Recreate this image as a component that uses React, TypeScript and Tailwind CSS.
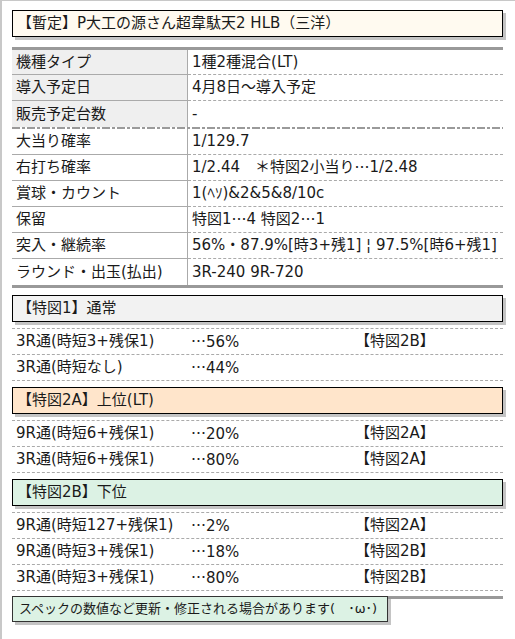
import React from "react";

const font = { fontFamily: '"DejaVu Sans", "Noto Sans CJK JP", sans-serif' };

// "…" comes out half width in DejaVu, the picture has the full-width one
const T = ({ text }: { text: string }) => {
  const parts = text.split("…");
  return (
    <>
      {parts.map((p, i) => (
        <React.Fragment key={i}>
          {i > 0 && <span className="font-['Noto_Sans_CJK_JP']">…</span>}
          {p}
        </React.Fragment>
      ))}
    </>
  );
};

const specRows: { label: string; value: string; shaded?: boolean }[] = [
  { label: "機種タイプ", value: "1種2種混合(LT)", shaded: true },
  { label: "導入予定日", value: "4月8日〜導入予定", shaded: true },
  { label: "販売予定台数", value: "-", shaded: true },
  { label: "大当り確率", value: "1/129.7" },
  { label: "右打ち確率", value: "1/2.44　＊特図2小当り…1/2.48" },
  { label: "賞球・カウント", value: "1(ﾍｿ)&2&5&8/10c" },
  { label: "保留", value: "特図1…4 特図2…1" },
  { label: "突入・継続率", value: "56%・87.9%[時3+残1] ¦ 97.5%[時6+残1]" },
  { label: "ラウンド・出玉(払出)", value: "3R-240 9R-720" },
];

const sections = [
  {
    title: "【特図1】通常",
    bg: "bg-[#f2f2f2]",
    rows: [
      ["3R通(時短3+残保1)", "…56%", "【特図2B】"],
      ["3R通(時短なし)", "…44%", ""],
    ],
  },
  {
    title: "【特図2A】上位(LT)",
    bg: "bg-[#ffe5cb]",
    rows: [
      ["9R通(時短6+残保1)", "…20%", "【特図2A】"],
      ["3R通(時短6+残保1)", "…80%", "【特図2A】"],
    ],
  },
  {
    title: "【特図2B】下位",
    bg: "bg-[#dcf2e4]",
    rows: [
      ["9R通(時短127+残保1)", "…2%", "【特図2A】"],
      ["9R通(時短3+残保1)", "…18%", "【特図2B】"],
      ["3R通(時短3+残保1)", "…80%", "【特図2B】"],
    ],
  },
];

const SpecTable = () => (
  <div className="mt-[10px] border-t-[3px] border-b-[3px] border-[#999]">
    {specRows.map((r, i) => {
      const last = i === specRows.length - 1;
      const dashDot = i === 2;
      return (
        <React.Fragment key={r.label}>
          <div className={`grid grid-cols-[176px_1fr] ${i === 0 ? "h-[25px]" : "h-[26px]"}`}>
            <div
              className={`flex items-center pl-[4px] border-r border-[#aaa] ${r.shaded ? "bg-[#efefef]" : "bg-white"} ${last || dashDot ? "" : "border-b border-b-[#aaa]"}`}
            >
              {r.label}
            </div>
            <div
              className={`flex items-center pl-[4px] whitespace-pre ${last || dashDot ? "" : "border-b border-dashed border-b-[#aaa]"}`}
            >
              <T text={r.value} />
            </div>
          </div>
          {dashDot && (
            <div className="h-[2px] bg-[repeating-linear-gradient(90deg,#9a9a9a_0_8px,transparent_8px_10px,#9a9a9a_10px_13px,transparent_13px_15px)]" />
          )}
        </React.Fragment>
      );
    })}
  </div>
);

export default function App() {
  return (
    <div
      className="min-h-[639px] w-[515px] border-l-2 border-t border-[#c8c8c8] bg-white pl-[10px] pt-[9px] text-[15px] text-[#1a1a1a]"
      style={font}
    >
      <div className="w-[491px]">
        <div className="h-[27px] flex items-center pl-[4px] border border-black bg-[#fffaf0] shadow-[3px_3px_0_#c4c4c4] whitespace-nowrap">
          【暫定】P大工の源さん超韋駄天2 HLB（三洋）
        </div>

        <SpecTable />

        {sections.map((s, si) => (
          <div key={s.title} className={si === 0 ? "mt-[7px]" : "mt-[6px]"}>
            <div className={`h-[27px] flex items-center pl-[4px] border border-black ${s.bg} shadow-[3px_3px_0_#c4c4c4]`}>
              {s.title}
            </div>
            <div className="mt-[6px] border-t border-dashed border-[#aaa]">
              {s.rows.map((row, ri) => (
                <div
                  key={ri}
                  className="grid grid-cols-[176px_164px_1fr] h-[26px] items-center border-b border-dashed border-[#aaa]"
                >
                  <div className="pl-[4px] whitespace-nowrap">{row[0]}</div>
                  <div className="pl-[3px]">
                    <T text={row[1]} />
                  </div>
                  <div className="pl-[3px]">{row[2]}</div>
                </div>
              ))}
            </div>
          </div>
        ))}

        <div className="mt-[5px] flex items-start">
          <div className="w-[376px] h-[26px] flex items-center pl-[6px] border border-[#333] bg-[#dcf2e4] text-[13px] shadow-[3px_3px_0_#c4c4c4] whitespace-pre">
            スペックの数値など更新・修正される場合があります(　･ω･)
          </div>
          <div className="flex-1 border-t-[3px] border-[#999]" />
        </div>
      </div>
    </div>
  );
}
